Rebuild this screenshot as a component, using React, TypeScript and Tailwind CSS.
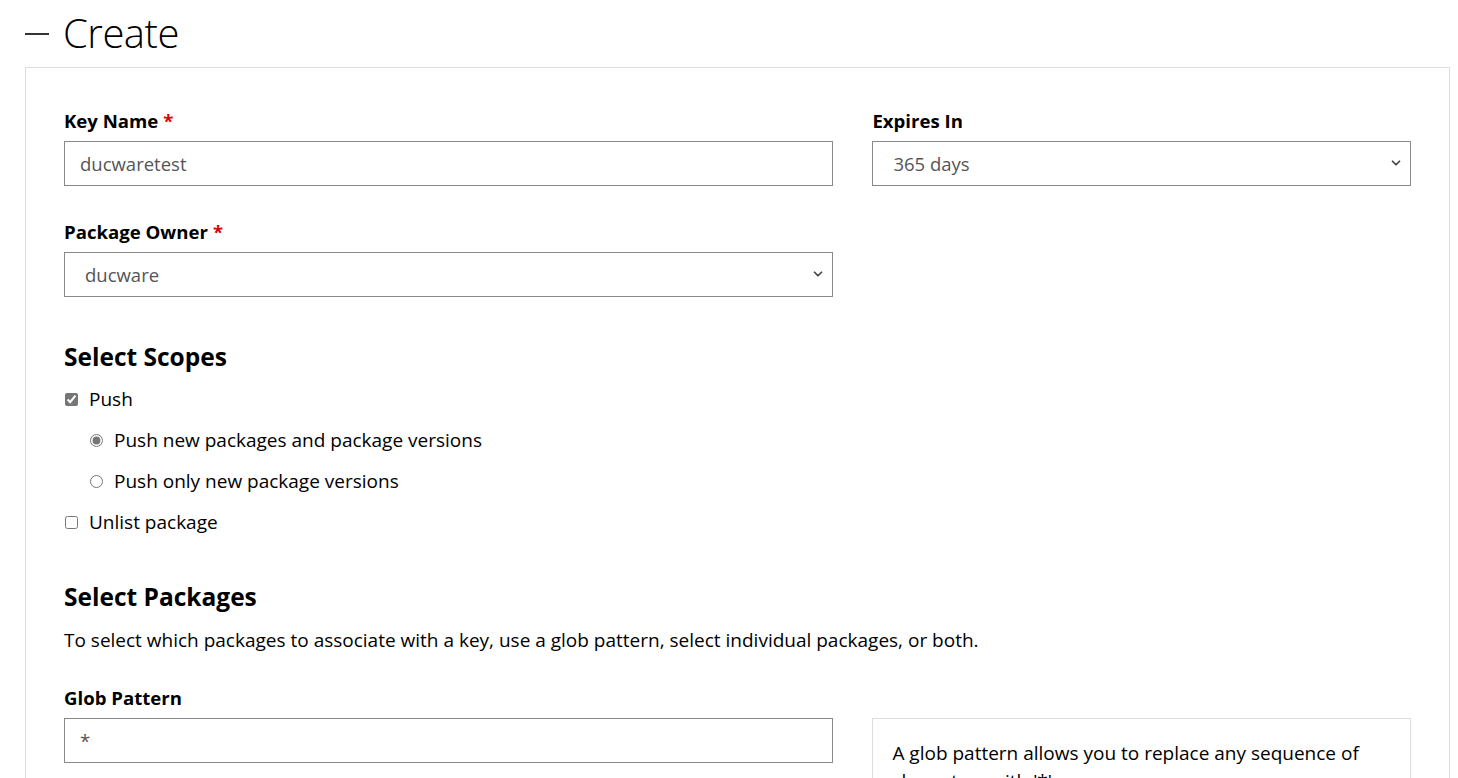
import { ChevronDown } from 'lucide-react';

const font = "font-['Open_Sans','Noto_Sans',sans-serif]";

function Label({ text, required }: { text: string; required?: boolean }) {
  return (
    <div className="h-[24px] leading-[24px] text-[18.6px] font-bold text-black mb-[8px]">
      {text}
      {required && <span className="text-[#e00000] ml-[5px]">*</span>}
    </div>
  );
}

function TextInput({ value }: { value: string }) {
  return (
    <input
      type="text"
      defaultValue={value}
      className="block w-full h-[45px] border border-[#8a8a8a] bg-white px-[15px] text-[18.5px] text-[#555] outline-none"
    />
  );
}

function Select({ value }: { value: string }) {
  return (
    <div className="relative">
      <select
        defaultValue={value}
        className="block w-full h-[45px] appearance-none border border-[#8a8a8a] bg-white pl-[20px] pr-[30px] text-[18.5px] text-[#555] outline-none"
      >
        <option>{value}</option>
      </select>
      {/* chevron */}
      <ChevronDown
        size={14}
        strokeWidth={3}
        className="pointer-events-none absolute right-[8px] top-[15px] text-[#444]"
      />
    </div>
  );
}

export default function App() {
  return (
    <div className={`min-h-screen bg-white text-black ${font}`}>
      {/* Title */}
      <div className="flex h-[67px] items-center pl-[25px]">
        <svg width="24" height="4" viewBox="0 0 24 4" className="mr-[14px] mt-[1px]">
          <line x1="0" y1="2" x2="24" y2="2" stroke="#000" strokeWidth="1.6" />
        </svg>
        <h1 className="text-[40px] font-light leading-none tracking-[-0.5px] pb-[2px]">Create</h1>
      </div>

      {/* Panel */}
      <div className="ml-[25px] mr-[8px] border border-[#dddddd] pl-[38px] pr-[38px] pt-[41px] pb-[40px]">
        <div className="flex gap-[39px]">
          <div className="w-[770px]">
            <Label text="Key Name" required />
            <TextInput value="ducwaretest" />
            <div className="mt-[34px]">
              <Label text="Package Owner" required />
              <Select value="ducware" />
            </div>
          </div>
          <div className="w-[539px]">
            <Label text="Expires In" />
            <Select value="365 days" />
          </div>
        </div>

        {/* Scopes */}
        <h2 className="mt-[44px] h-[32px] text-[24.5px] font-bold leading-[32px]">Select Scopes</h2>
        <div className="mt-[6px]">
          <label className="flex h-[41px] items-center text-[19px]">
            <input type="checkbox" defaultChecked className="ml-[1px] mr-[11px] h-[13px] w-[13px] accent-[#767676]" />
            Push
          </label>
          <label className="flex h-[41px] items-center pl-[26px] text-[19px]">
            <input type="radio" name="push" defaultChecked className="mr-[11px] h-[13px] w-[13px] accent-[#767676]" />
            Push new packages and package versions
          </label>
          <label className="flex h-[41px] items-center pl-[26px] text-[19px]">
            <input type="radio" name="push" className="mr-[11px] h-[13px] w-[13px] accent-[#767676]" />
            Push only new package versions
          </label>
          <label className="flex h-[41px] items-center text-[19px]">
            <input type="checkbox" className="ml-[1px] mr-[11px] h-[13px] w-[13px] accent-[#767676]" />
            Unlist package
          </label>
        </div>

        {/* Packages */}
        <h2 className="mt-[38px] h-[32px] text-[24.5px] font-bold leading-[32px]">Select Packages</h2>
        <p className="mt-[13px] h-[28px] text-[19px] leading-[28px]">
          To select which packages to associate with a key, use a glob pattern, select individual packages, or both.
        </p>

        <div className="mt-[32px] flex items-start gap-[39px]">
          <div className="w-[770px]">
            <Label text="Glob Pattern" />
            <TextInput value="*" />
          </div>
          <div className="mt-[32px] w-[539px] border border-[#dddddd] px-[19px] py-[20px] text-[19px] leading-[28px]">
            A glob pattern allows you to replace any sequence of
            <br />
            characters with '*'.
          </div>
        </div>
      </div>
    </div>
  );
}
